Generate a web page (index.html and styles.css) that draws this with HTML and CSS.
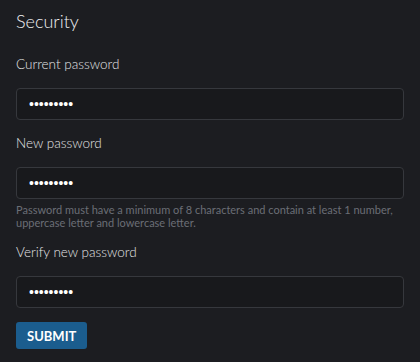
FILE: index.html
```html
<!DOCTYPE html>
<html lang="en">
<head>
    <meta charset="UTF-8">
    <meta name="viewport" content="width=device-width, initial-scale=1.0">
    <title>Security</title>
    <link rel="stylesheet" href="styles.css">
</head>
<body>
    <div class="security-panel">
        <h2>Security</h2>
        <form id="password-form">
            <div class="input-field">
                <label for="current-password">Current password</label>
                <input type="password" id="current-password" value="123456789">
            </div>
            <div class="input-field">
                <label for="new-password">New password</label>
                <input type="password" id="new-password" value="123456789">
                <p class="hint">Password must have a minimum of 8 characters and contain at least 1 number, uppercase letter and lowercase letter.</p>
            </div>
            <div class="input-field">
                <label for="verify-password">Verify new password</label>
                <input type="password" id="verify-password" value="123456789" autofocus>
            </div>
            <button type="submit" class="submit-btn">Submit</button>
        </form>
    </div>
</body>
</html>
```

FILE: styles.css
```css
body {
    font-family: Lato, "Open Sans", sans-serif;
    background-color: #1c1d21;
    color: #e4e5e7;
    margin: 0;
    padding: 0;
}
.security-panel {
    padding: 9px 16px 10px;
}
.security-panel h2 {
    margin: 0 0 21px;
    font-size: 18px;
    font-weight: 300;
    line-height: 24px;
    color: #eeeff1;
}
.input-field {
    margin-bottom: 13px;
}
.input-field label {
    display: block;
    font-size: 13.5px;
    font-weight: 300;
    line-height: 20px;
    margin-bottom: 14px;
}
.input-field input {
    box-sizing: border-box;
    width: 100%;
    height: 32px;
    padding: 0 12px;
    background-color: #18191c;
    border: 1px solid #36383d;
    border-radius: 4px;
    color: #fff;
    font-family: "Liberation Sans", sans-serif;
    font-size: 14px;
    outline: none;
    caret-color: #fff;
}
.hint {
    margin: 5px 0 0;
    font-size: 11px;
    line-height: 12.5px;
    color: #6b6e76;
}
.submit-btn {
    margin-top: 1px;
    height: 27px;
    padding: 0 11px;
    background-color: #1b5d8e;
    border: none;
    border-radius: 3px;
    color: #fff;
    font-family: inherit;
    font-size: 13px;
    font-weight: 700;
    text-transform: uppercase;
    cursor: pointer;
}
```
